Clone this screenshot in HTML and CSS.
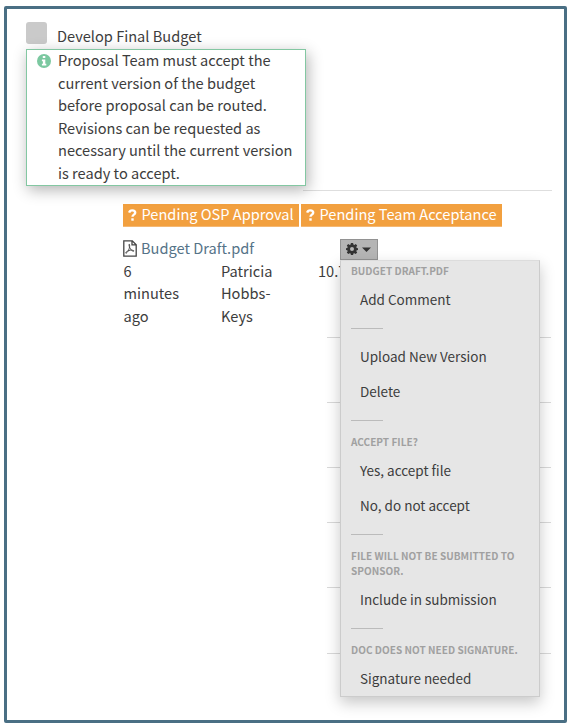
FILE: index.html
```html
<!DOCTYPE html>
<html lang="en">
<head>
<meta charset="utf-8">
<title>Develop Final Budget</title>
<link rel="stylesheet" href="styles.css">
</head>
<body>
<main class="frame">
  <div class="task"><span class="check"></span><span class="task-name">Develop Final Budget</span></div>
  <section class="hint">
    <svg class="info" viewBox="0 0 14 14"><circle cx="7" cy="7" r="7"/><path fill="#fff" d="M5.800 2h2.500v2.100H5.800zM4.900 5.500h3.400v4.300h1v1.700H4.900V9.800h1V7.200h-1z"/></svg>
    <p>Proposal Team must accept the<br>current version of the budget<br>before proposal can be routed.<br>Revisions can be requested as<br>necessary until the current version<br>is ready to accept.</p>
  </section>
  <hr class="rule">
  <div class="badges">
    <span class="badge"><svg class="q" viewBox="0 0 9 12"><path d="M1.200 3.600C1.600 2 2.800 1.400 4.200 1.400c1.700 0 3 .9 3 2.300 0 2-2.700 1.900-2.700 4"/><path d="M4.500 9.300v2.400"/></svg><span>Pending OSP Approval</span></span>
    <span class="badge team"><svg class="q" viewBox="0 0 9 12"><path d="M1.200 3.600C1.600 2 2.800 1.400 4.200 1.400c1.700 0 3 .9 3 2.300 0 2-2.700 1.900-2.700 4"/><path d="M4.500 9.300v2.400"/></svg><span>Pending Team Acceptance</span></span>
  </div>
  <div class="file">
    <a class="file-name"><svg class="pdf" viewBox="0 0 14 17"><path d="M.8.8h8.500l3.900 3.900v11.500H.8zM9 .8v4.100h4.200"/><path class="thin" d="M6.300 4.200c-.9.2.2 3.200 1.200 4.800 1 1.500 2.600 2.600 3.300 2.200.7-.6-1.200-1.200-3.200-1-2.300.2-4.900 1.600-4.900 2.700.1 1.100 1.900-.6 2.900-2.800 1-2.100 1.500-5.500.7-5.900z"/></svg><span>Budget Draft.pdf</span></a>
    <div class="actions">
      <button class="gear"><svg viewBox="0 0 26 12"><path fill-rule="evenodd" d="M4.900 0h2.200l.3 1.600 1 .4 1.300-.9 1.500 1.500-.9 1.300.4 1 1.300.3v1.800l-1.300.3-.4 1 .9 1.300-1.500 1.500-1.300-.9-1 .4-.3 1.400H4.900l-.3-1.400-1-.4-1.300.9L.8 9.600l.9-1.300-.4-1L0 7V5.200l1.300-.3.4-1L.8 2.600l1.500-1.500 1.300.9 1-.4zM6 4a2 2 0 1 0 0 4 2 2 0 0 0 0-4z"/><path d="M16 4.500h9L20.500 9z"/></svg></button>
      <nav class="menu">
        <h6>BUDGET DRAFT.PDF</h6>
        <a>Add Comment</a>
        <hr>
        <a>Upload New Version</a>
        <a>Delete</a>
        <hr>
        <h6>ACCEPT FILE?</h6>
        <a>Yes, accept file</a>
        <a>No, do not accept</a>
        <hr>
        <h6>FILE WILL NOT BE SUBMITTED TO<br>SPONSOR.</h6>
        <a>Include in submission</a>
        <hr>
        <h6>DOC DOES NOT NEED SIGNATURE.</h6>
        <a>Signature needed</a>
      </nav>
    </div>
  </div>
  <div class="meta"><span>6<br>minutes<br>ago</span><span>Patricia<br>Hobbs-<br>Keys</span><span>10.7</span></div>
  <div class="rows"><i></i><i></i><i class="short"></i><i></i><i class="tall"></i><i></i></div>
</main>
</body>
</html>
```
FILE: styles.css
```css
* { box-sizing: border-box; }
body {
  margin: 0;
  padding: 6px 5px 4px 4px;
  height: 727px;
  overflow: hidden;
  background: #fff;
  color: #3d3d3d;
  font: 14.6px/22.5px "Noto Sans CJK SC", "Noto Sans", sans-serif;
}
p, h6 { margin: 0; }
hr { margin: 0; border: 0; }
.frame {
  height: 717px;
  border: 3px solid #4a6f84;
  border-radius: 2px;
  padding: 13px 13px 0 19px;
}
.task { display: flex; height: 27px; white-space: nowrap; }
.check { width: 21px; height: 22px; border-radius: 3px; background: #cacaca; }
.task-name { margin: 3px 0 0 10px; }
.hint {
  position: relative;
  display: flex;
  width: 280px;
  height: 137px;
  border: 1px solid #83c7a2;
  background: #fff;
  box-shadow: 2px 4px 14px rgba(0,0,0,.3);
  white-space: nowrap;
}
.hint p { margin-top: -1px; }
.info { width: 14px; height: 14px; margin: 4px 7px 0 10px; fill: #7bc8a0; flex: none; }
.rule { width: 249px; height: 1px; margin: 4px 0 13px 277px; background: #dedede; }
.badges { display: flex; gap: 2px; margin-left: 97px; white-space: nowrap; color: #fff; line-height: 20px; }
.badge { display: flex; width: 176px; height: 23px; padding-left: 5px; background: #f2a03f; border-bottom: 1px solid #f5b873; }
.badge.team { width: 201px; }
.q { width: 9px; height: 12px; margin: 5px 4.5px 0 0; fill: none; stroke: #fff; stroke-width: 2.4; flex: none; }
.file { display: flex; height: 22px; margin: 11px 0 0 97px; }
.file-name { display: flex; width: 217px; color: #557388; white-space: nowrap; line-height: 20.5px; }
.pdf { width: 14px; height: 17px; margin: 2px 4px 0 0; fill: none; stroke: #444; stroke-width: 1.3; }
.thin { stroke-width: .9; }
.actions { position: relative; }
.gear { display: block; width: 38px; height: 21px; margin-top: 1px; padding: 0 0 0 5px; border: 1px solid #929292; background: #b5b5b5; }
.gear svg { display: block; width: 26px; height: 12px; margin-top: -1px; fill: #333; }
.menu {
  position: absolute;
  z-index: 1;
  left: 0;
  top: 22px;
  width: 200px;
  height: 437px;
  border: 1px solid #ccc;
  border-top-color: #dcdcdc;
  background: #e6e6e6;
  box-shadow: 0 6px 14px rgba(0,0,0,.22);
  font-size: 13.5px;
  white-space: nowrap;
}
.menu h6 { padding: 2px 0 5px 10px; font-size: 10px; line-height: 15px; font-weight: 700; color: #a0a0a0; letter-spacing: .04px; }
.menu a { display: block; height: 35px; padding-left: 19px; line-height: 33.5px; }
.menu hr { width: 32px; height: 1px; margin: 10px 0 11px 10px; background: #bbb; }
.meta { display: grid; grid-template-columns: 97.5px 97px 60px; height: 77px; margin-left: 97.5px; }
.meta span { margin-top: -.5px; }
.rows { width: 224px; margin-left: 301px; }
.rows i { display: block; height: 65px; border-top: 1px solid #d9d9d9; }
.rows .short { height: 55px; }
.rows .tall { height: 66px; }
```
